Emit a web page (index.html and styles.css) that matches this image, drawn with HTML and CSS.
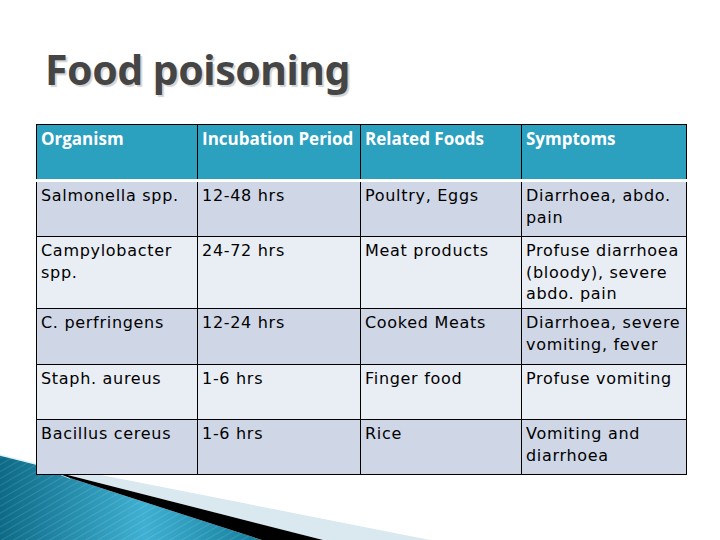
FILE: index.html
```html
<!DOCTYPE html>
<html>
<head>
<meta charset="utf-8">
<link rel="stylesheet" href="styles.css">
</head>
<body>
<div class="slide">
  <svg class="deco" width="720" height="540" viewBox="0 0 720 540">
    <defs>
      <linearGradient id="teal" x1="0" y1="0" x2="1" y2="0">
        <stop offset="0" stop-color="#0d6a86"/>
        <stop offset="0.55" stop-color="#3fb0d2"/>
        <stop offset="1" stop-color="#157e9c"/>
      </linearGradient>
      <pattern id="stripes" width="6" height="6" patternUnits="userSpaceOnUse" patternTransform="rotate(60)">
        <rect width="1" height="6" fill="#ffffff" opacity="0.12"/>
      </pattern>
    </defs>
    <polygon points="0,455 36,464 70,478 262,540 0,540" fill="url(#teal)"/>
    <polygon points="0,455 36,464 70,478 262,540 0,540" fill="url(#stripes)"/>
    <polyline points="0,455 36,464 70,478" fill="none" stroke="#dff2f8" stroke-width="1.5"/>
    <polygon points="86,472 430,540 323,540 64,474" fill="#d9e9ef"/>
    <polygon points="52,471 323,540 262,540 70,478" fill="#000"/>
  </svg>
  <h1 class="title">Food poisoning</h1>
  <table class="grid">
    <colgroup>
      <col class="c1"><col class="c2"><col class="c3"><col class="c4">
    </colgroup>
    <tr class="head">
      <th>Organism</th><th>Incubation Period</th><th>Related Foods</th><th>Symptoms</th>
    </tr>
    <tr class="odd r54 first">
      <td>Salmonella spp.</td><td>12-48 hrs</td><td>Poultry, Eggs</td><td>Diarrhoea, abdo. pain</td>
    </tr>
    <tr class="even r72">
      <td>Campylobacter spp.</td><td>24-72 hrs</td><td>Meat products</td><td>Profuse diarrhoea (bloody), severe abdo. pain</td>
    </tr>
    <tr class="odd r56">
      <td>C. perfringens</td><td>12-24 hrs</td><td>Cooked Meats</td><td>Diarrhoea, severe vomiting, fever</td>
    </tr>
    <tr class="even r55">
      <td>Staph. aureus</td><td>1-6 hrs</td><td>Finger food</td><td>Profuse vomiting</td>
    </tr>
    <tr class="odd r55">
      <td>Bacillus cereus</td><td>1-6 hrs</td><td>Rice</td><td>Vomiting and diarrhoea</td>
    </tr>
  </table>
</div>
</body>
</html>
```

FILE: styles.css
```css
html, body {
  margin: 0;
  padding: 0;
  background: #ffffff;
}
.slide {
  position: relative;
  width: 720px;
  height: 540px;
  overflow: hidden;
  padding-top: 44px;
  box-sizing: border-box;
}
.deco {
  position: absolute;
  left: 0;
  top: 0;
  z-index: 0;
}
.title {
  position: relative;
  z-index: 1;
  margin: 0 0 0 45px;
  height: 80px;
  font-family: "Noto Sans", "DejaVu Sans", sans-serif;
  font-weight: 700;
  font-size: 41px;
  line-height: 50px;
  color: #454545;
  text-shadow: 2px 2px 1px #d4d4d4;
  letter-spacing: -0.5px;
}
.grid {
  position: relative;
  z-index: 1;
  margin-left: 36px;
  border-collapse: collapse;
  table-layout: fixed;
  width: 650px;
  font-family: "DejaVu Sans", sans-serif;
  font-size: 16px;
  letter-spacing: 0.7px;
  color: #000;
}
.c1 { width: 161px; }
.c2 { width: 163px; }
.c3 { width: 161px; }
.c4 { width: 165px; }
.grid th, .grid td {
  border: 1px solid #000;
  vertical-align: top;
  text-align: left;
  padding: 3px 3px 0 4px;
  line-height: 21.5px;
}
.grid th {
  background: #2ba0bf;
  color: #fff;
  font-family: "Open Sans", "DejaVu Sans", sans-serif;
  font-weight: 700;
  font-size: 17px;
  letter-spacing: 0;
  height: 51px;
  padding-top: 3px;
}
.head th {
  border-bottom: 3px solid #fff;
}
.odd td { background: #cfd6e6; }
.even td { background: #e9edf4; }
.r54 td { height: 51px; }
.r72 td { height: 68px; }
.r56 td { height: 52px; }
.r55 td { height: 51px; }
.first td { border-top: 3px solid #fff; }
```
